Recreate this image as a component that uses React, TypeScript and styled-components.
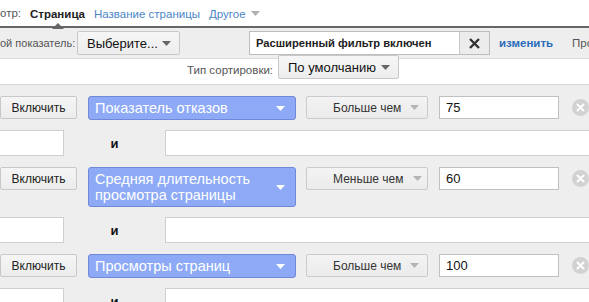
import styled, { createGlobalStyle } from "styled-components";

const GlobalStyle = createGlobalStyle`
  html, body {
    margin: 0;
    padding: 0;
    background: #eeeeee;
    overflow: hidden;
  }
  body {
    font-family: "Liberation Sans", Arial, sans-serif;
    color: #222;
    white-space: nowrap;
  }
`;

type Rule = {
  metric: string[];
  op: string;
  value: string;
};

const rules: Rule[] = [
  { metric: ["Показатель отказов"], op: "Больше чем", value: "75" },
  { metric: ["Средняя длительность", "просмотра страницы"], op: "Меньше чем", value: "60" },
  { metric: ["Просмотры страниц"], op: "Больше чем", value: "100" },
];

function Caret({ color }: { color: string }) {
  return (
    <svg width="9" height="5" viewBox="0 0 9 5">
      <path d="M0 0 L9 0 L4.5 5 Z" fill={color} />
    </svg>
  );
}

function RemoveIcon() {
  return (
    <svg width="17" height="17" viewBox="0 0 17 17">
      <circle cx="8.5" cy="8.5" r="8.5" fill="#d2d2d2" />
      <path d="M5.5 5.5 L11.5 11.5 M11.5 5.5 L5.5 11.5" stroke="#fff" strokeWidth="2" strokeLinecap="round" />
    </svg>
  );
}

export default function App() {
  return (
    <Page>
      <GlobalStyle />
      <TopBar>
        <Muted>отр:</Muted>
        <Tab $active>Страница</Tab>
        <Tab>Название страницы</Tab>
        <Tab>
          Другое <Caret color="#b0b0b0" />
        </Tab>
      </TopBar>

      <Toolbar>
        <Label>ой показатель:</Label>
        <SelectButton $width={103}>
          Выберите... <Caret color="#666" />
        </SelectButton>
        <FilterBox>
          <FilterText>Расширенный фильтр включен</FilterText>
          <ClearButton>
            <svg width="11" height="11" viewBox="0 0 11 11">
              <path d="M1 1 L10 10 M10 1 L1 10" stroke="#333" strokeWidth="2.4" />
            </svg>
          </ClearButton>
        </FilterBox>
        <EditLink>изменить</EditLink>
        <Muted>Про</Muted>
      </Toolbar>

      <SortRow>
        <SortLabel>Тип сортировки:</SortLabel>
        <SortButton>
          По умолчанию <Caret color="#666" />
        </SortButton>
      </SortRow>

      <Rules>
        {rules.map((rule) => (
          <RuleBlock key={rule.value}>
            <ControlRow>
              <PlainButton>Включить</PlainButton>
              <MetricSelect>
                <span>
                  {rule.metric.map((line) => (
                    <div key={line}>{line}</div>
                  ))}
                </span>
                <Caret color="#fff" />
              </MetricSelect>
              <OpButton>
                {rule.op} <Caret color="#b4b4b4" />
              </OpButton>
              <ValueInput>{rule.value}</ValueInput>
              <RemoveSlot>
                <RemoveIcon />
              </RemoveSlot>
            </ControlRow>
            <RangeRow>
              <RangeInput $width={84} $offset={-20} />
              <AndText>и</AndText>
              <RangeInput $width={460} $offset={0} />
            </RangeRow>
          </RuleBlock>
        ))}
      </Rules>
    </Page>
  );
}

const Page = styled.div`
  width: 589px;
  height: 302px;
  overflow: hidden;
  background: #eeeeee;
`;

const TopBar = styled.nav`
  display: flex;
  align-items: center;
  gap: 9px;
  height: 26px;
  background: #fff;
  border-bottom: 2px solid #666;
  font-size: 11.5px;
`;

const Muted = styled.span`
  flex: none;
  color: #555;
  font-size: 11.5px;
`;

const Tab = styled.span<{ $active?: boolean }>`
  position: relative;
  flex: none;
  display: flex;
  align-items: center;
  gap: 5px;
  padding-top: 1px;
  color: ${({ $active }) => ($active ? "#222" : "#4a86c5")};
  font-weight: ${({ $active }) => ($active ? "bold" : "normal")};

  &::after {
    content: "";
    display: ${({ $active }) => ($active ? "block" : "none")};
    position: absolute;
    left: 50%;
    bottom: -9px;
    margin-left: -6px;
    border: 6px solid transparent;
    border-bottom-color: #666;
    border-top-width: 0;
  }
`;

const Toolbar = styled.div`
  display: flex;
  align-items: center;
  height: 30px;
  border-bottom: 1px solid #dadada;
`;

const Label = styled.span`
  flex: none;
  width: 77px;
  color: #555;
  font-size: 11px;
`;

const SelectButton = styled.div<{ $width: number }>`
  flex: none;
  display: flex;
  align-items: center;
  justify-content: space-between;
  box-sizing: border-box;
  width: ${({ $width }) => $width}px;
  height: 24px;
  padding: 0 8px 0 9px;
  border: 1px solid #c8c8c8;
  border-radius: 2px;
  background: linear-gradient(#f6f6f6, #ededed);
  font-size: 13px;
  color: #111;
`;

const FilterBox = styled.div`
  flex: none;
  display: flex;
  margin-left: 69px;
  height: 24px;
  box-sizing: border-box;
  border: 1px solid #bdbdbd;
  background: #fff;
`;

const FilterText = styled.span`
  display: flex;
  align-items: center;
  box-sizing: border-box;
  width: 209px;
  padding-left: 6px;
  font-size: 11.2px;
  font-weight: bold;
  color: #222;
`;

const ClearButton = styled.span`
  display: flex;
  align-items: center;
  justify-content: center;
  width: 29px;
  border-left: 1px solid #c8c8c8;
  background: #ececec;
`;

const EditLink = styled.span`
  flex: none;
  width: 54px;
  margin-left: 9px;
  margin-right: 19px;
  color: #2a6cba;
  font-weight: bold;
  font-size: 11.5px;
`;

const SortRow = styled.div`
  display: flex;
  align-items: flex-start;
  height: 25px;
  padding-left: 187px;
  background: #fff;
  border-bottom: 1px solid #d6d6d6;
`;

const SortLabel = styled.span`
  flex: none;
  margin-top: 5px;
  width: 91px;
  color: #555;
  font-size: 11.5px;
`;

const SortButton = styled(SelectButton).attrs({ $width: 121 })`
  margin-top: -4px;
`;

const Rules = styled.div`
  display: flex;
  flex-direction: column;
  gap: 11px;
  padding-top: 11px;
`;

const RuleBlock = styled.div`
  display: flex;
  flex-direction: column;
  gap: 10px;
`;

const ControlRow = styled.div`
  display: flex;
  align-items: flex-start;
`;

const PlainButton = styled.div`
  flex: none;
  display: flex;
  align-items: center;
  justify-content: center;
  box-sizing: border-box;
  width: 77px;
  height: 23px;
  margin-right: 11px;
  border: 1px solid #c8c8c8;
  border-radius: 2px;
  background: linear-gradient(#f5f5f5, #ececec);
  font-size: 12px;
  color: #222;
`;

const MetricSelect = styled.div`
  flex: none;
  display: flex;
  align-items: center;
  justify-content: space-between;
  box-sizing: border-box;
  width: 208px;
  min-height: 24px;
  margin-right: 10px;
  padding: 3px 10px 3px 6px;
  border: 1px solid #6f88d8;
  border-radius: 3px;
  background: #8eaaf6;
  color: #fff;
  font-size: 14.5px;
  line-height: 16px;
`;

const OpButton = styled.div`
  flex: none;
  display: flex;
  align-items: center;
  gap: 9px;
  box-sizing: border-box;
  width: 122px;
  height: 23px;
  margin-right: 11px;
  padding-left: 26px;
  border: 1px solid #cbcbcb;
  border-radius: 2px;
  background: linear-gradient(#f3f3f3, #ebebeb);
  font-size: 12px;
  color: #333;
`;

const ValueInput = styled.div`
  flex: none;
  display: flex;
  align-items: center;
  box-sizing: border-box;
  width: 120px;
  height: 23px;
  padding-left: 6px;
  border: 1px solid #c0c0c0;
  background: #fff;
  font-size: 13px;
  color: #111;
`;

const RemoveSlot = styled.div`
  flex: none;
  display: flex;
  align-items: center;
  height: 23px;
  margin-left: 13px;
`;

const RangeRow = styled.div`
  display: flex;
  align-items: center;
`;

const RangeInput = styled.div<{ $width: number; $offset: number }>`
  flex: none;
  box-sizing: border-box;
  width: ${({ $width }) => $width}px;
  height: 26px;
  margin-left: ${({ $offset }) => $offset}px;
  border: 1px solid #cfcfcf;
  background: #fff;
`;

const AndText = styled.span`
  flex: none;
  width: 101px;
  text-align: center;
  font-weight: bold;
  font-size: 13px;
  color: #111;
`;
